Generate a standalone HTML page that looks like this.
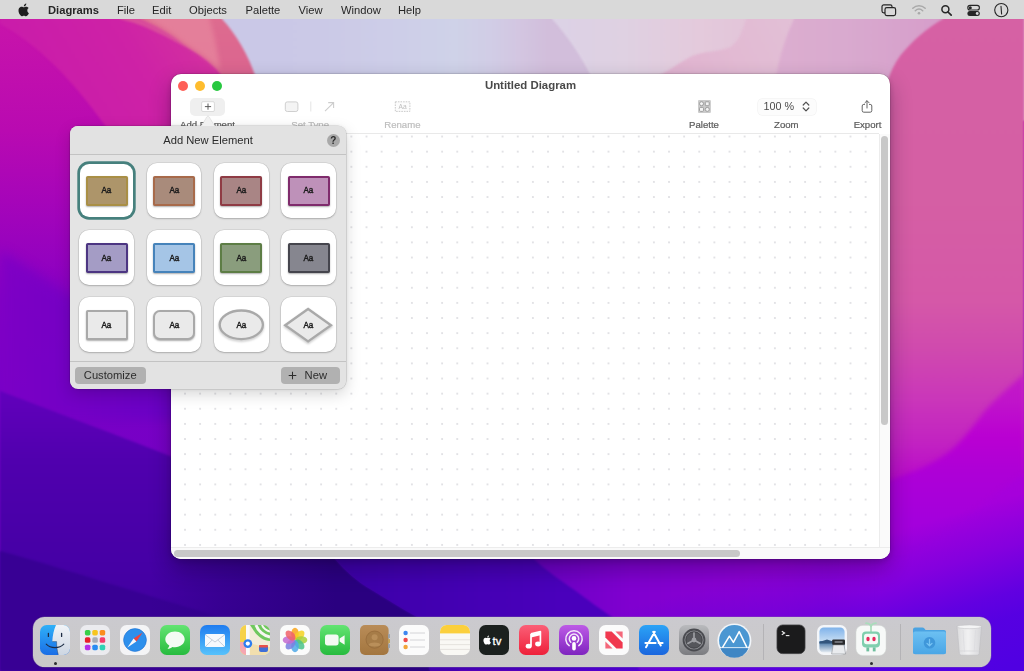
<!DOCTYPE html>
<html lang="en">
<head>
<meta charset="utf-8">
<title>Untitled Diagram</title>
<style>
*{box-sizing:border-box;margin:0;padding:0}
html,body{width:1024px;height:671px;overflow:hidden;background:#3a0090}
body{position:relative;font-family:"Liberation Sans",sans-serif;color:#222;-webkit-font-smoothing:antialiased}
.abs{position:absolute}
#wall{position:absolute;left:0;top:0;width:1024px;height:671px;display:block}
/* ---------- menubar ---------- */
#menubar{will-change:transform;position:absolute;left:0;top:0;width:1024px;height:19px;background:#d9d9d9}
#menubar span{position:absolute;top:3.9px;font-size:11.2px;line-height:13px;color:#262626;white-space:nowrap}
#menubar span.b{font-weight:bold}
#menubar svg{position:absolute}
/* ---------- window ---------- */
#win{will-change:transform;position:absolute;left:171px;top:74px;width:719px;height:485px;background:#fff;border-radius:10px;
 box-shadow:0 0 0 0.5px rgba(0,0,0,.18),0 10px 22px rgba(20,0,40,.32),0 2px 6px rgba(20,0,40,.18);overflow:hidden}
#title{position:absolute;left:0;width:719px;top:5px;text-align:center;font-size:11.4px;line-height:13px;font-weight:bold;color:#494949}
.tl{position:absolute;top:6.5px;width:10.5px;height:10.5px;border-radius:50%}
.tbl{position:absolute;font-size:9.6px;line-height:11px;color:#5a5a5a;-webkit-text-stroke:0.2px currentColor;white-space:nowrap;top:44.7px;width:80px;text-align:center}
.tbl.dis{color:#bdbdbd}
#canvas{position:absolute;left:0;top:59px;width:708px;height:414px;
 background-color:#fff;
 background-image:radial-gradient(circle,#dcdce0 0.55px,rgba(255,255,255,0) 1.25px);
 background-size:15.125px 15.125px;background-position:6.44px -5.06px;border-top:1px solid #e9e9e9}
#vtrack{position:absolute;left:708px;top:60px;width:11px;height:413px;background:#fafafa;border-left:1px solid #ececec}
#vthumb{position:absolute;left:710px;top:61.5px;width:7px;height:289.5px;border-radius:3.5px;background:#c8c8c8}
#htrack{position:absolute;left:0;top:473px;width:719px;height:12px;background:#fafafa;border-top:1px solid #ececec}
#hthumb{position:absolute;left:3px;top:476px;width:566px;height:6.5px;border-radius:3.5px;background:#c8c8c8}

/* ---------- popover ---------- */
#pop{will-change:transform;position:absolute;left:70px;top:126px;width:276px;height:262.5px;border-radius:8px;background:#e4e4e4;
 box-shadow:0 0 0 0.6px rgba(0,0,0,.17),0 5px 15px rgba(0,0,0,.17),0 0 4px rgba(0,0,0,.08)}
#pophead{position:absolute;left:0;top:0;width:276px;height:28.8px;background:#e2e2e2;border-radius:8px 8px 0 0;border-bottom:1px solid #c3c3c3}
#poptitle{position:absolute;left:0;width:276px;top:7.6px;text-align:center;font-size:11.2px;line-height:13px;color:#2a2a2a}
#popfoot{position:absolute;left:0;top:235.1px;width:276px;height:27.4px;border-top:1px solid #c3c3c3;border-radius:0 0 8px 8px;background:#e3e3e3}
.pbtn{position:absolute;top:241.1px;height:16.5px;border-radius:4px;background:#b1b1b1;font-size:11.2px;line-height:16px;color:#2c2c2c;text-align:center;white-space:nowrap}
.tile{position:absolute;width:54.8px;height:54.8px;border-radius:10px;background:#fff;box-shadow:0 0 0 0.5px rgba(0,0,0,.12),0 1px 2px rgba(0,0,0,.2)}
.tile.sel{box-shadow:none}
.tile.sel::after{content:"";position:absolute;left:0.9px;top:0.9px;right:0.9px;bottom:0.9px;box-shadow:0 0 0 2.7px #46807d;border-radius:9.2px}
.sh{position:absolute;left:6.4px;top:12.9px;width:42px;height:30.2px;border:2px solid;box-shadow:0 1px 1.8px rgba(0,0,0,.32);border-radius:1.8px}
.aa{position:absolute;left:0;width:54.8px;top:22.6px;text-align:center;font-size:9.2px;line-height:11px;color:#1c1c1c;transform:scaleX(.88);-webkit-text-stroke:0.45px #1c1c1c}
.tile svg{position:absolute;left:0;top:0}

/* ---------- dock ---------- */
#dock{position:absolute;left:33.3px;top:617px;width:958px;height:50px;border-radius:11.5px;background:linear-gradient(#cbcacf,#cac9c8);box-shadow:0 0 0 0.5px rgba(255,255,255,.25),0 0 0 1px rgba(0,0,0,.1)}
.di{position:absolute;display:block;overflow:visible}
.dsep{position:absolute;top:623.5px;width:1px;height:36px;background:#b4b3b6}
.ddot{position:absolute;top:661.8px;width:3px;height:3px;border-radius:50%;background:#2b2b2e}
</style>
</head>
<body>
<!-- ================= WALLPAPER ================= -->
<svg id="wall" viewBox="0 0 1024 671" preserveAspectRatio="none">
<defs>
<linearGradient id="gL" x1="0" y1="0" x2="0" y2="1">
 <stop offset="0.028" stop-color="#c814aa"/><stop offset="0.194" stop-color="#b90ab1"/>
 <stop offset="0.298" stop-color="#a605b9"/><stop offset="0.387" stop-color="#9402bf"/>
 <stop offset="0.447" stop-color="#8400c3"/><stop offset="0.58" stop-color="#7800c6"/><stop offset="1" stop-color="#7400c4"/>
</linearGradient>
<linearGradient id="gSal" x1="0" y1="0" x2="0" y2="1"><stop offset="0.15" stop-color="#de6c8f"/><stop offset="1" stop-color="#da6090"/></linearGradient>
<linearGradient id="gLav" x1="222" y1="0" x2="1024" y2="0" gradientUnits="userSpaceOnUse">
 <stop offset="0" stop-color="#cac8e7"/><stop offset="0.12" stop-color="#cbc9e7"/><stop offset="0.2" stop-color="#cdcde8"/><stop offset="0.29" stop-color="#cfd2e8"/><stop offset="0.334" stop-color="#d1cde6"/><stop offset="0.37" stop-color="#d3c6e1"/><stop offset="0.406" stop-color="#d2bedb"/><stop offset="1" stop-color="#d2bedb"/></linearGradient>
<linearGradient id="gLt" x1="552" y1="0" x2="790" y2="0" gradientUnits="userSpaceOnUse"><stop offset="0" stop-color="#dcd2e6"/><stop offset="0.3" stop-color="#dfd1e2"/><stop offset="0.62" stop-color="#e4cadc"/><stop offset="1" stop-color="#e2c1d7"/></linearGradient>
<linearGradient id="gPk" x1="660" y1="80" x2="800" y2="10" gradientUnits="userSpaceOnUse"><stop offset="0" stop-color="#e0b2cf"/><stop offset="0.5" stop-color="#e2bad3"/><stop offset="1" stop-color="#e2c1d7"/></linearGradient>
<linearGradient id="gPk2" x1="776" y1="0" x2="950" y2="0" gradientUnits="userSpaceOnUse"><stop offset="0" stop-color="#dcaed0"/><stop offset="0.4" stop-color="#d9aacf"/><stop offset="1" stop-color="#d69cca"/></linearGradient>
<linearGradient id="gR" x1="0" y1="0" x2="0" y2="671" gradientUnits="userSpaceOnUse">
 <stop offset="0.03" stop-color="#d661a4"/><stop offset="0.3" stop-color="#d55fa4"/><stop offset="0.45" stop-color="#d558a8"/><stop offset="0.52" stop-color="#d04aae"/><stop offset="0.596" stop-color="#ca36ba"/><stop offset="0.66" stop-color="#c222c2"/><stop offset="0.72" stop-color="#b808cc"/><stop offset="0.8" stop-color="#a000dc"/><stop offset="1" stop-color="#a000dc"/></linearGradient>
<linearGradient id="gR2" x1="0" y1="360" x2="0" y2="671" gradientUnits="userSpaceOnUse">
 <stop offset="0" stop-color="#c41ec4"/><stop offset="0.13" stop-color="#c014ca"/><stop offset="0.245" stop-color="#ba00d2"/><stop offset="0.354" stop-color="#ae00d6"/><stop offset="0.515" stop-color="#a400dc"/><stop offset="0.64" stop-color="#a000dc"/><stop offset="1" stop-color="#a000dc"/></linearGradient>
<linearGradient id="gR3" x1="0" y1="432" x2="0" y2="671" gradientUnits="userSpaceOnUse">
 <stop offset="0" stop-color="#b202d4"/><stop offset="0.2" stop-color="#a800da"/><stop offset="0.37" stop-color="#a200dc"/><stop offset="0.535" stop-color="#a000dc"/><stop offset="1" stop-color="#a000dc"/></linearGradient>
<linearGradient id="gB1" x1="0" y1="391" x2="0" y2="671" gradientUnits="userSpaceOnUse"><stop offset="0" stop-color="#6200bc"/><stop offset="0.25" stop-color="#5000ae"/><stop offset="0.6" stop-color="#4600a6"/><stop offset="1" stop-color="#3c009a"/></linearGradient>
<linearGradient id="gBm" x1="335" y1="0" x2="560" y2="0" gradientUnits="userSpaceOnUse"><stop offset="0" stop-color="#3c00a8"/><stop offset="1" stop-color="#4a00bc"/></linearGradient>
<linearGradient id="gBr" x1="534" y1="0" x2="1024" y2="0" gradientUnits="userSpaceOnUse"><stop offset="0" stop-color="#6a00c4"/><stop offset="0.2" stop-color="#8000d0"/><stop offset="0.46" stop-color="#8c00d3"/><stop offset="0.6" stop-color="#9000d4"/><stop offset="0.706" stop-color="#a000dc"/><stop offset="1" stop-color="#a000dc"/></linearGradient>
<linearGradient id="gDk" x1="150" y1="0" x2="335" y2="0" gradientUnits="userSpaceOnUse"><stop offset="0" stop-color="#2c0082" stop-opacity="0"/><stop offset="0.4" stop-color="#2c0082" stop-opacity="0.5"/><stop offset="1" stop-color="#2a0080" stop-opacity="1"/></linearGradient>
<linearGradient id="gBlue" x1="880" y1="535" x2="925.5" y2="691.8" gradientUnits="userSpaceOnUse"><stop offset="0" stop-color="#5000e2" stop-opacity="0"/><stop offset="0.29" stop-color="#5000e2" stop-opacity="0.35"/><stop offset="0.56" stop-color="#5000e2" stop-opacity="0.78"/><stop offset="0.7" stop-color="#5000e2" stop-opacity="0.92"/><stop offset="1" stop-color="#5000e2" stop-opacity="1"/></linearGradient>
<linearGradient id="gVi" x1="0" y1="0" x2="180" y2="0" gradientUnits="userSpaceOnUse"><stop offset="0" stop-color="#7c00c6"/><stop offset="1" stop-color="#6400c3"/></linearGradient>
<linearGradient id="gSw" x1="50" y1="130" x2="210" y2="30" gradientUnits="userSpaceOnUse"><stop offset="0" stop-color="#c91bab"/><stop offset="0.6" stop-color="#ce22a6"/><stop offset="1" stop-color="#d4339e"/></linearGradient>
<filter color-interpolation-filters="sRGB" id="b2" x="-10%" y="-10%" width="120%" height="120%"><feGaussianBlur stdDeviation="1.2"/></filter>
<filter color-interpolation-filters="sRGB" id="b3" x="-10%" y="-10%" width="120%" height="120%"><feGaussianBlur stdDeviation="2.5"/></filter>
<filter color-interpolation-filters="sRGB" id="b6" x="-20%" y="-20%" width="140%" height="140%"><feGaussianBlur stdDeviation="6"/></filter>
<filter color-interpolation-filters="sRGB" id="b20" x="-30%" y="-30%" width="160%" height="160%"><feGaussianBlur stdDeviation="20"/></filter>
</defs>
<rect width="1024" height="671" fill="url(#gL)"/>
<!-- top-left lighter magenta sweep -->
<path d="M0,0 L0,24 C38,44 74,82 104,124 C128,158 152,200 176,260 L300,260 L300,0 Z" fill="url(#gSw)" filter="url(#b2)"/>
<!-- mid pink band + salmon -->
<path d="M120,0 L120,19 C140,24 150,29 160,34 C172,40 178,43 186,47 C196,52 202,56 208,61 C216,68 220,72 224,78 C228,88 230,100 231,120 L300,120 L300,0 Z" fill="#d94c9b" filter="url(#b2)"/>
<path d="M141,0 L141,19 C158,26 172,34 184,44 C196,52 206,58 214,66 C222,74 228,84 232,100 L300,110 L300,0 Z" fill="url(#gSal)" filter="url(#b2)"/>
<path d="M148,14 L208,14 C214,34 218,52 220,70 L214,65 C206,57 196,51 184,43 C172,33 160,25 148,19 Z" fill="#e6839c" opacity="0.85" filter="url(#b3)"/>
<!-- lavender sky -->
<path d="M222,0 L222,19 C236,34 248,54 256,78 C260,92 262,104 263,120 L1024,120 L1024,0 Z" fill="url(#gLav)" filter="url(#b2)"/>
<!-- lighter facet 553..690 -->
<path d="M552,0 L552,19 C566,34 580,54 592,78 L790,78 L790,0 Z" fill="url(#gLt)" filter="url(#b2)"/>
<!-- pink facet rising to the right -->
<path d="M650,80 C668,72 680,62 692,56 C704,51 716,52 728,48 C738,44 742,32 746,19 L746,0 L1024,0 L1024,120 L650,120 Z" fill="url(#gPk)" filter="url(#b2)"/>
<path d="M794,0 L794,19 C786,36 780,54 776,76 L776,120 L1024,120 L1024,0 Z" fill="url(#gPk2)" filter="url(#b2)"/>
<path d="M0,250 C30,268 50,282 70,296 C110,320 150,338 200,360 L200,420 L0,420 Z" fill="url(#gVi)" opacity="0.8" filter="url(#b6)"/>
<!-- lower-left bands -->
<path d="M0,391 C60,414 120,436 170,456 C260,492 330,520 400,548 L460,671 L0,671 Z" fill="url(#gB1)" filter="url(#b2)"/>
<path d="M0,551 C40,562 76,573 107,583 C144,594 176,604 206,613 C240,624 300,640 360,656 L360,671 L0,671 Z" fill="#380094" filter="url(#b2)"/>
<!-- bottom strip -->
<path d="M335,530 L335,559 C346,572 358,582 370,589 C388,600 404,610 417,617 L430,671 L150,671 L150,530 Z" fill="url(#gDk)"/>
<path d="M335,530 L335,559 C346,572 358,582 370,589 C388,600 404,610 417,617 L430,671 L1024,671 L1024,530 Z" fill="url(#gBm)" filter="url(#b2)"/>
<path d="M534,530 L534,559 C548,572 560,580 573,589 C588,600 600,609 612,617 L640,671 L1024,671 L1024,530 Z" fill="url(#gBr)" filter="url(#b2)"/>
<!-- big right pink hill -->
<path d="M943,0 L943,19 C927,28 912,41 900,56 C889,71 884,90 882,112 L880,671 L1024,671 L1024,0 Z" fill="url(#gR)" filter="url(#b2)"/>
<!-- right diagonal facets -->
<path d="M1024,374 C1006,390 994,400 984,412 C970,430 960,444 946,454 C926,468 908,474 880,484 L880,671 L1024,671 Z" fill="url(#gR2)" filter="url(#b3)"/>
<path d="M1024,474 C1000,490 982,506 964,520 C940,538 916,552 880,568 L880,671 L1024,671 Z" fill="url(#gR3)" filter="url(#b3)"/>
<rect x="560" y="470" width="464" height="201" fill="url(#gBlue)"/>
</svg>

<!-- ================= MENUBAR ================= -->
<div id="menubar">
<span class="b" style="left:48px">Diagrams</span>
<span style="left:117px">File</span>
<span style="left:152px">Edit</span>
<span style="left:189px">Objects</span>
<span style="left:245.5px">Palette</span>
<span style="left:298.5px">View</span>
<span style="left:341px">Window</span>
<span style="left:398px">Help</span>

<svg style="left:17px;top:1.5px" width="15" height="16" viewBox="0 0 15 16"><path d="M10.3,8.4c0-1.6,1.3-2.4,1.4-2.4c-0.8-1.1-1.9-1.3-2.4-1.3c-1-0.1-2,0.6-2.5,0.6c-0.5,0-1.3-0.6-2.1-0.6C3.6,4.7,2.6,5.3,2,6.300c-1.1,1.900-0.300,4.800,0.800,6.300c0.500,0.800,1.200,1.600,2,1.600c0.800,0,1.100-0.500,2.100-0.500c1,0,1.200,0.500,2.100,0.500c0.900,0,1.400-0.800,2-1.500c0.600-0.900,0.900-1.700,0.900-1.800C11.800,10.900,10.300,10.300,10.300,8.400z M8.700,3.600C9.100,3.100,9.400,2.300,9.300,1.600C8.700,1.600,7.900,2,7.500,2.500C7.100,3,6.700,3.700,6.800,4.400C7.500,4.500,8.200,4.100,8.700,3.600z" fill="#1e1e1e"/></svg>
<svg style="left:880px;top:3px" width="18" height="14" viewBox="0 0 18 14"><rect x="2" y="1.8" width="10" height="8" rx="1.8" fill="none" stroke="#262626" stroke-width="1.2"/><rect x="5" y="4.6" width="10.600" height="8" rx="1.800" fill="#d9d9d9" stroke="#262626" stroke-width="1.200"/></svg>
<svg style="left:911px;top:3px" width="16" height="13" viewBox="0 0 16 13"><g fill="none" stroke="#a9a9a9" stroke-width="1.500" stroke-linecap="round"><path d="M1.800,5.200C5.400,1.800,10.600,1.800,14.200,5.200"/><path d="M4.300,7.700C6.500,5.700,9.500,5.700,11.700,7.700"/></g><circle cx="8" cy="10.200" r="1.300" fill="#a9a9a9"/></svg>
<svg style="left:940px;top:4px" width="13" height="13" viewBox="0 0 13 13"><circle cx="5.400" cy="5.300" r="3.500" fill="none" stroke="#262626" stroke-width="1.500"/><path d="M8,8L11.200,11.200" stroke="#262626" stroke-width="1.700" stroke-linecap="round"/></svg>
<svg style="left:966px;top:4px" width="15" height="13" viewBox="0 0 15 13"><rect x="1.800" y="1.400" width="11.600" height="4.600" rx="2.300" fill="none" stroke="#262626" stroke-width="1.100"/><circle cx="4.300" cy="3.700" r="1.500" fill="#262626"/><rect x="1.400" y="7" width="12.400" height="5" rx="2.500" fill="#262626"/><circle cx="11.200" cy="9.500" r="1.400" fill="#d9d9d9"/></svg>
<svg style="left:993px;top:2px" width="17" height="16" viewBox="0 0 17 16"><circle cx="8.300" cy="8.100" r="6.600" fill="none" stroke="#262626" stroke-width="1.100"/><path d="M8,4.200L8.600,12" stroke="#262626" stroke-width="1.100" stroke-linecap="round"/></svg>
</div>

<!-- ================= WINDOW ================= -->
<div id="win">
 <div class="tl" style="left:6.5px;background:#fe5f57"></div>
 <div class="tl" style="left:23.5px;background:#febc2e"></div>
 <div class="tl" style="left:40.5px;background:#28c840"></div>
 <div id="title">Untitled Diagram</div>

 <!-- toolbar -->
 <div class="abs" style="left:19px;top:23.5px;width:35px;height:18px;border-radius:5px;background:#efefef"></div>
 <svg class="abs" style="left:29px;top:26px" width="16" height="14" viewBox="0 0 16 14"><rect x="1.6" y="1.7" width="12.8" height="9.8" rx="1.4" fill="#fff" stroke="#cdcdcd" stroke-width="0.7"/><path d="M8,3.500V9.700M4.900,6.600H11.100" stroke="#555" stroke-width="0.950" fill="none"/></svg>
 <div class="tbl" style="left:-3.5px">Add Element</div>
 <svg class="abs" style="left:112px;top:26px" width="56" height="14" viewBox="0 0 56 14"><rect x="2.3" y="1.9" width="12.6" height="9.6" rx="2" fill="#f4f4f4" stroke="#cfcfcf" stroke-width="1"/><path d="M27.8,1.5V11.5" stroke="#e4e4e4" stroke-width="1"/><path d="M42,11.2L50.4,2.8M45.2,2.6H50.6V8" stroke="#cdcdcd" stroke-width="1.1" fill="none"/></svg>
 <div class="tbl dis" style="left:99.2px">Set Type</div>
 <svg class="abs" style="left:222px;top:26px" width="20" height="14" viewBox="0 0 20 14"><rect x="2.3" y="1.8" width="14.6" height="9.6" fill="#fcfcfc" stroke="#c4c4c4" stroke-width="0.9" stroke-dasharray="1.6 1"/><text x="9.6" y="9.3" font-size="6.6" text-anchor="middle" fill="#bdbdbd" font-family="Liberation Sans, sans-serif">Aa</text></svg>
 <div class="tbl dis" style="left:191.4px">Rename</div>
 <svg class="abs" style="left:525px;top:25px" width="18" height="16" viewBox="0 0 18 16"><rect x="2" y="1.100" width="12.900" height="12.900" rx="1" fill="#cbcbcb"/><g fill="#f4f4f4" stroke="#8e8e8e" stroke-width="0.800"><circle cx="5.500" cy="4.700" r="2"/><rect x="9.300" y="2.800" width="3.900" height="3.900" rx="0.500"/><rect x="3.500" y="8.400" width="4" height="4" rx="1"/><circle cx="11.300" cy="10.400" r="2"/></g></svg>
 <div class="tbl" style="left:493px">Palette</div>
 <div class="abs" style="left:586.5px;top:24.5px;width:58px;height:16px;border-radius:4px;background:#fcfcfc;box-shadow:0 0 0 0.5px #eeeeee"></div>
 <div class="abs" style="left:592.6px;top:26px;font-size:10.8px;line-height:12px;color:#4b4b4b;white-space:nowrap">100 %</div>
 <svg class="abs" style="left:630px;top:26px" width="10" height="13" viewBox="0 0 10 13"><path d="M2.2,5L5,2.2L7.8,5M2.2,8L5,10.8L7.8,8" stroke="#505050" stroke-width="1.2" fill="none" stroke-linecap="round" stroke-linejoin="round"/></svg>
 <div class="tbl" style="left:575.3px">Zoom</div>
 <svg class="abs" style="left:689px;top:25px" width="14" height="15" viewBox="0 0 14 15"><path d="M4.6,5.4H3.8Q2.2,5.4 2.2,7V11.6Q2.2,13.2 3.8,13.2H10.2Q11.8,13.2 11.8,11.6V7Q11.8,5.4 10.2,5.4H9.4" stroke="#5c5c5c" stroke-width="0.95" fill="none" stroke-linecap="round"/><path d="M7,9V1.9M4.9,3.8L7,1.7L9.1,3.8" stroke="#5c5c5c" stroke-width="0.95" fill="none" stroke-linecap="round" stroke-linejoin="round"/></svg>
 <div class="tbl" style="left:656.5px">Export</div>
 <div id="canvas"></div>
 <div id="vtrack"></div><div id="vthumb"></div>
 <div id="htrack"></div><div id="hthumb"></div>
</div>

<!-- ================= DOCK ================= -->
<svg width="0" height="0" style="position:absolute"><defs>
<linearGradient id="dFi" x1="0" y1="0" x2="0" y2="1"><stop offset="0" stop-color="#2eb0f8"/><stop offset="1" stop-color="#1b6ee6"/></linearGradient>
<linearGradient id="dFw" x1="0" y1="0" x2="0" y2="1"><stop offset="0" stop-color="#f1f4f8"/><stop offset="1" stop-color="#cdd6e2"/></linearGradient>
<linearGradient id="dMs" x1="0" y1="0" x2="0" y2="1"><stop offset="0" stop-color="#63e472"/><stop offset="1" stop-color="#27bb3e"/></linearGradient>
<linearGradient id="dMl" x1="0" y1="0" x2="0" y2="1"><stop offset="0" stop-color="#1f7cf0"/><stop offset="1" stop-color="#57c2fb"/></linearGradient>
<linearGradient id="dMu" x1="0" y1="0" x2="0" y2="1"><stop offset="0" stop-color="#fb5f77"/><stop offset="1" stop-color="#ee2039"/></linearGradient>
<linearGradient id="dPo" x1="0" y1="0" x2="0" y2="1"><stop offset="0" stop-color="#bd5be6"/><stop offset="1" stop-color="#7f24bf"/></linearGradient>
<linearGradient id="dAs" x1="0" y1="0" x2="0" y2="1"><stop offset="0" stop-color="#2ba3f6"/><stop offset="1" stop-color="#1a66de"/></linearGradient>
<linearGradient id="dSp" x1="0" y1="0" x2="0" y2="1"><stop offset="0" stop-color="#b9babd"/><stop offset="1" stop-color="#7b7c80"/></linearGradient>
<linearGradient id="dFo" x1="0" y1="0" x2="0" y2="1"><stop offset="0" stop-color="#6cc0f2"/><stop offset="1" stop-color="#4aa6e6"/></linearGradient>
<linearGradient id="dTr" x1="0" y1="0" x2="1" y2="0"><stop offset="0" stop-color="#dcdcde"/><stop offset="0.45" stop-color="#f1f1f2"/><stop offset="1" stop-color="#d6d6d9"/></linearGradient>
<linearGradient id="dCo" x1="0" y1="0" x2="0" y2="1"><stop offset="0" stop-color="#b98c58"/><stop offset="1" stop-color="#a3763f"/></linearGradient>
<linearGradient id="dPv" x1="0" y1="0" x2="0" y2="1"><stop offset="0" stop-color="#7fb2ea"/><stop offset="0.55" stop-color="#c6ddf3"/><stop offset="0.56" stop-color="#3f6fa0"/><stop offset="1" stop-color="#e8eef4"/></linearGradient>
<clipPath id="dClip"><rect width="30" height="30" rx="6.700" ry="6.700"/></clipPath>
</defs></svg>
<div id="dock">
</div>
<div id="dockicons">
<svg class="di" style="left:40.3px;top:625px" width="30" height="30" viewBox="0 0 30 30"><g clip-path="url(#dClip)"><rect width="30" height="30" fill="url(#dFi)"/>
<path d="M16,0C13.800,4.600 12.600,10.400 12.300,16.600H16.600C16.600,21.600 17.200,26 18.400,30H30V0Z" fill="url(#dFw)"/></g>
<path d="M12.300,16.600H16.600C16.600,21.600 17.200,26 18.300,29.600" fill="none" stroke="#1d2c44" stroke-width="0.700" opacity="0.55"/>
<path d="M8.400,8.300V11.400M21.600,8.300V11.400" stroke="#1d2c44" stroke-width="1.300" stroke-linecap="round"/>
<path d="M6.200,19.200C10.600,23.800 19.400,23.800 23.800,19.200" fill="none" stroke="#1d2c44" stroke-width="1.100" stroke-linecap="round"/></svg>
<svg class="di" style="left:80px;top:625px" width="30" height="30" viewBox="0 0 30 30"><rect width="30" height="30" rx="6.700" ry="6.700" fill="#ebebef"/><rect x="4.9" y="4.9" width="5.500" height="5.500" rx="1.600" fill="#38d048"/><rect x="12.3" y="4.9" width="5.500" height="5.500" rx="1.600" fill="#f7c51e"/><rect x="19.7" y="4.9" width="5.500" height="5.500" rx="1.600" fill="#fb8c1c"/><rect x="4.9" y="12.3" width="5.500" height="5.500" rx="1.600" fill="#e8202c"/><rect x="12.3" y="12.3" width="5.500" height="5.500" rx="1.600" fill="#a9adb6"/><rect x="19.7" y="12.3" width="5.500" height="5.500" rx="1.600" fill="#f53d6c"/><rect x="4.9" y="19.7" width="5.500" height="5.500" rx="1.600" fill="#b431e8"/><rect x="12.3" y="19.7" width="5.500" height="5.500" rx="1.600" fill="#2a8cf2"/><rect x="19.7" y="19.7" width="5.500" height="5.500" rx="1.600" fill="#2fd3b4"/></svg>
<svg class="di" style="left:120.2px;top:625px" width="30" height="30" viewBox="0 0 30 30"><rect width="30" height="30" rx="6.700" ry="6.700" fill="#f4f4f6"/><circle cx="15" cy="15" r="11.400" fill="#2d8fec"/><circle cx="15" cy="15" r="11.400" fill="none" stroke="#1c6fd0" stroke-width="0.600"/>
<path d="M22.600,7.400L13.600,13.600L16.400,16.400Z" fill="#f0443c"/><path d="M7.400,22.600L13.600,13.600L16.400,16.400Z" fill="#f6f8fb"/></svg>
<svg class="di" style="left:160.1px;top:625px" width="30" height="30" viewBox="0 0 30 30"><rect width="30" height="30" rx="6.700" ry="6.700" fill="url(#dMs)"/><path d="M15,6.400C9.600,6.400 5.300,9.900 5.300,14.300C5.300,16.900 6.900,19.200 9.300,20.600C9.100,21.900 8.400,23 7.500,23.800C9.500,23.700 11.100,23 12.300,21.900C13.200,22.100 14.100,22.200 15,22.200C20.400,22.200 24.700,18.700 24.700,14.300C24.700,9.900 20.400,6.400 15,6.400Z" fill="#f4fbf4"/></svg>
<svg class="di" style="left:200.2px;top:625px" width="30" height="30" viewBox="0 0 30 30"><rect width="30" height="30" rx="6.700" ry="6.700" fill="url(#dMl)"/><rect x="5" y="9" width="20" height="13" rx="1.800" fill="#f6f9fd"/><path d="M5.600,10L15,17L24.400,10M5.600,21.400L12.200,15M24.400,21.400L17.800,15" fill="none" stroke="#b9c4d2" stroke-width="0.800"/></svg>
<svg class="di" style="left:240.1px;top:625px" width="30" height="30" viewBox="0 0 30 30"><g clip-path="url(#dClip)"><rect width="30" height="30" fill="#f2ecd8"/><rect x="0" y="0" width="6" height="30" fill="#f6d24a"/><rect x="0" y="17" width="6" height="13" fill="#f5a6b2"/>
<path d="M10,0H30V16C24,16 18,12 14,6Z" fill="#6fc85e"/><path d="M16,0C18,6 24,11 30,12" fill="none" stroke="#f7f7f2" stroke-width="3"/><path d="M22,0C23,3 27,6 30,6.500" fill="none" stroke="#f7f7f2" stroke-width="2"/>
<rect x="6" y="0" width="3.600" height="30" fill="#fafafa"/><path d="M10,18C16,20 22,22 30,22V30H10Z" fill="#f2dfae"/>
<rect x="19" y="20" width="9" height="7" rx="2" fill="#3f6fd8"/><rect x="19" y="20" width="9" height="2.400" rx="1" fill="#e8504a"/></g>
<circle cx="7.800" cy="18.600" r="4.400" fill="#2d7ff0"/><circle cx="7.800" cy="18.600" r="2.100" fill="#fff"/></svg>
<svg class="di" style="left:280.3px;top:625px" width="30" height="30" viewBox="0 0 30 30"><rect width="30" height="30" rx="6.700" ry="6.700" fill="#fbfbfb"/><ellipse cx="15" cy="8.700" rx="3.800" ry="6" fill="#f9a51c" opacity="0.860" transform="rotate(0 15 15)"/><ellipse cx="15" cy="8.700" rx="3.800" ry="6" fill="#f5d323" opacity="0.860" transform="rotate(45 15 15)"/><ellipse cx="15" cy="8.700" rx="3.800" ry="6" fill="#a8d03c" opacity="0.860" transform="rotate(90 15 15)"/><ellipse cx="15" cy="8.700" rx="3.800" ry="6" fill="#4cc38a" opacity="0.860" transform="rotate(135 15 15)"/><ellipse cx="15" cy="8.700" rx="3.800" ry="6" fill="#4fa9e8" opacity="0.860" transform="rotate(180 15 15)"/><ellipse cx="15" cy="8.700" rx="3.800" ry="6" fill="#7a7fe0" opacity="0.860" transform="rotate(225 15 15)"/><ellipse cx="15" cy="8.700" rx="3.800" ry="6" fill="#c46bd0" opacity="0.860" transform="rotate(270 15 15)"/><ellipse cx="15" cy="8.700" rx="3.800" ry="6" fill="#f0626a" opacity="0.860" transform="rotate(315 15 15)"/></svg>
<svg class="di" style="left:319.6px;top:625px" width="30" height="30" viewBox="0 0 30 30"><rect width="30" height="30" rx="6.700" ry="6.700" fill="url(#dMs)"/><rect x="5" y="9.600" width="13.600" height="10.800" rx="2.600" fill="#f3faf3"/><path d="M19.600,13.400L24.600,10.200V19.800L19.600,16.600Z" fill="#f3faf3"/></svg>
<svg class="di" style="left:359.6px;top:625px" width="30" height="30" viewBox="0 0 30 30"><rect width="28.600" height="30" rx="5" fill="url(#dCo)"/><rect x="28" y="9" width="2" height="4" rx="0.600" fill="#9aa0a8"/><rect x="28" y="14" width="2" height="4" rx="0.600" fill="#c2a15a"/><rect x="28" y="19" width="2" height="4" rx="0.600" fill="#9aa0a8"/>
<circle cx="14.600" cy="14.600" r="8.600" fill="#a67c48" stroke="#93693a" stroke-width="0.700"/><circle cx="14.600" cy="12.200" r="3" fill="#b98f5a"/><path d="M8.600,19.800C9.800,16.600 19.400,16.600 20.600,19.800C19,22 10.200,22 8.600,19.800Z" fill="#b98f5a"/></svg>
<svg class="di" style="left:399.4px;top:625px" width="30" height="30" viewBox="0 0 30 30"><rect width="30" height="30" rx="6.700" ry="6.700" fill="#fbfbfb"/><circle cx="6.600" cy="8" r="2.200" fill="#3d86f0"/><circle cx="6.600" cy="15" r="2.200" fill="#ee4b4b"/><circle cx="6.600" cy="22" r="2.200" fill="#f2a53a"/>
<path d="M11,8H26M11,15H26M11,22H26" stroke="#cfcfd3" stroke-width="0.900"/></svg>
<svg class="di" style="left:439.5px;top:625px" width="30" height="30" viewBox="0 0 30 30"><g clip-path="url(#dClip)"><rect width="30" height="30" fill="#f9f8f4"/><rect width="30" height="8.400" fill="#fbcf3c"/><path d="M0,14.800H30M0,19.600H30M0,24.400H30" stroke="#dcdad4" stroke-width="0.700"/></g></svg>
<svg class="di" style="left:478.8px;top:625px" width="30" height="30" viewBox="0 0 30 30"><rect width="30" height="30" rx="6.700" ry="6.700" fill="#1b201e"/><path d="M9.300,13.600c0-1.200,1-1.800,1-1.800c-0.600-0.800-1.400-0.900-1.700-0.900c-0.700-0.100-1.400,0.400-1.800,0.400c-0.400,0-0.900-0.400-1.500-0.400c-0.800,0-1.500,0.400-1.900,1.100c-0.800,1.400-0.200,3.500,0.600,4.600c0.400,0.600,0.900,1.200,1.500,1.200c0.600,0,0.800-0.400,1.500-0.400c0.700,0,0.900,0.400,1.500,0.400c0.600,0,1-0.600,1.400-1.100c0.400-0.600,0.600-1.200,0.600-1.300C10.500,15.400,9.300,14.900,9.300,13.600z M8.100,10.100c0.300-0.400,0.500-0.900,0.500-1.400c-0.500,0-1,0.300-1.300,0.700c-0.300,0.300-0.600,0.900-0.500,1.400C7.300,10.800,7.800,10.500,8.100,10.100z" fill="#fff" transform="translate(1.400,1.800)"/>
<text x="13.600" y="19.800" font-size="11.400" font-family="Liberation Sans, sans-serif" fill="#fff" stroke="#fff" stroke-width="0.300">tv</text></svg>
<svg class="di" style="left:519.3px;top:625px" width="30" height="30" viewBox="0 0 30 30"><rect width="30" height="30" rx="6.700" ry="6.700" fill="url(#dMu)"/><path d="M12,8.800L21.400,6.600V18.600" fill="none" stroke="#fff" stroke-width="1.700" stroke-linejoin="round"/><path d="M12,8.800V20.800" stroke="#fff" stroke-width="1.700"/><path d="M12,9.200L21.400,7V10.200L12,12.400Z" fill="#fff"/><ellipse cx="9.700" cy="21.200" rx="3" ry="2.400" fill="#fff"/><ellipse cx="19.100" cy="19" rx="3" ry="2.400" fill="#fff"/></svg>
<svg class="di" style="left:558.9px;top:625px" width="30" height="30" viewBox="0 0 30 30"><rect width="30" height="30" rx="6.700" ry="6.700" fill="url(#dPo)"/><path d="M10.200,20.600A8.200,8.200 0 1 1 19.800,20.600" fill="none" stroke="#f3e8fa" stroke-width="1.500" stroke-linecap="round"/><path d="M11.800,17.200A4.700,4.700 0 1 1 18.200,17.200" fill="none" stroke="#f3e8fa" stroke-width="1.500" stroke-linecap="round"/><circle cx="15" cy="13.400" r="2.300" fill="#fff"/><rect x="13.200" y="17" width="3.600" height="8.600" rx="1.800" fill="#fff"/></svg>
<svg class="di" style="left:599.1px;top:625px" width="30" height="30" viewBox="0 0 30 30"><rect width="30" height="30" rx="6.700" ry="6.700" fill="#fbfbfb"/><path d="M6.400,6.400H12.600L23.600,17.400V23.600H17.400L6.400,12.600Z" fill="#f0384e"/><path d="M6.400,16.400L13.600,23.600H6.400Z" fill="#f4677a"/><path d="M23.600,13.600L16.400,6.400H23.600Z" fill="#f4677a"/></svg>
<svg class="di" style="left:638.7px;top:625px" width="30" height="30" viewBox="0 0 30 30"><rect width="30" height="30" rx="6.700" ry="6.700" fill="url(#dAs)"/><path d="M15.800,6.800L9.400,18M14.200,6.800L21.800,20.400M6.400,18H16.600M19.600,18H23.600M8.400,19.800L7,22.200" stroke="#fff" stroke-width="2" stroke-linecap="round" fill="none"/></svg>
<svg class="di" style="left:678.8px;top:625px" width="30" height="30" viewBox="0 0 30 30"><rect width="30" height="30" rx="6.700" ry="6.700" fill="url(#dSp)"/><circle cx="15" cy="15" r="11.400" fill="#4a4b50"/><circle cx="15" cy="15" r="9.600" fill="#8a8b90"/><circle cx="15" cy="15" r="8.200" fill="#55565b"/>
<path d="M15,15V6.800M15,15L22.100,19.100M15,15L7.900,19.100" stroke="#9d9ea3" stroke-width="1.700"/><circle cx="15" cy="15" r="2.400" fill="#9d9ea3"/><circle cx="15" cy="15" r="8.200" fill="none" stroke="#37383c" stroke-width="0.800"/></svg>
<svg class="di" style="left:717px;top:622.6px" width="34.8" height="34.8" viewBox="0 0 34.8 34.8"><circle cx="17.400" cy="17.400" r="17" fill="#f1f5f9"/><circle cx="17.400" cy="17.400" r="15.300" fill="#4b97d2"/><path d="M5.400,24.600L12.400,13.200L16.400,19.400L22.200,8.600L30,24.600" fill="none" stroke="#fff" stroke-width="1.500" stroke-linejoin="round"/><path d="M3,24.800H32" stroke="#fff" stroke-width="1"/><path d="M3.200,25.200H31.600A15.300,15.300 0 0 1 3.200,25.200Z" fill="#3f86c4"/></svg>
<svg class="di" style="left:776.9px;top:625.4px" width="28" height="28.6" viewBox="0 0 28 28.6"><rect width="28" height="28.600" rx="5.600" fill="#1b1b1c" stroke="#3a3a3c" stroke-width="0.800"/><path d="M4.800,6.200L7.600,8L4.800,9.800" stroke="#f0f0f0" stroke-width="1.100" fill="none"/><path d="M8.800,10.600H12.400" stroke="#f0f0f0" stroke-width="1.100"/></svg>
<svg class="di" style="left:817.1px;top:625px" width="30" height="30" viewBox="0 0 30 30"><g clip-path="url(#dClip)"><rect width="30" height="30" fill="#f4f6f9"/><rect x="2.400" y="2.400" width="25.200" height="25.200" rx="4.400" fill="url(#dPv)"/><path d="M2.400,17L10,14.500L16,16.500L22,15L27.600,17V18.600H2.400Z" fill="#32557c"/></g>
<rect x="15.200" y="14.400" width="12.800" height="5.600" rx="1.200" fill="#2a2b2e"/><path d="M16.200,20H27L28.600,29H14.600Z" fill="#e9ebee" stroke="#8d9096" stroke-width="0.600"/><rect x="17.400" y="16" width="8.400" height="2" rx="1" fill="#6e7076"/></svg>
<svg class="di" style="left:856.2px;top:621.6px" width="30" height="33.4" viewBox="0 0 30 33.4"><rect y="3.400" width="30" height="30" rx="6.700" ry="6.700" fill="#f7f9f8" stroke="#d4dad6" stroke-width="0.500"/>
<path d="M15,10V4.600M15,5.400C15,2.600 12.600,1.400 10,1.200M15,5.400C15,2.600 17.400,1.400 20,1.200" stroke="#a9dcbb" stroke-width="1.700" fill="none" stroke-linecap="round"/>
<rect x="6" y="9.600" width="18" height="16" rx="4" fill="#7fcfae"/><rect x="8" y="11.800" width="14" height="10.400" rx="2.600" fill="#f4faf7"/><rect x="10.400" y="25.400" width="2.800" height="4" fill="#6fbf9e"/><rect x="16.800" y="25.400" width="2.800" height="4" fill="#6fbf9e"/>
<ellipse cx="12" cy="17" rx="1.700" ry="2.200" fill="#e8285c"/><ellipse cx="18" cy="17" rx="1.700" ry="2.200" fill="#e8285c"/></svg>
<svg class="di" style="left:911.6px;top:625.4px" width="35" height="30" viewBox="0 0 35 30"><path d="M1,4.600Q1,2.600 3,2.600H10.400Q11.600,2.600 12.400,3.600L13.600,5H32Q34,5 34,7V27Q34,29 32,29H3Q1,29 1,27Z" fill="#4ba3e2"/><rect x="1" y="6.600" width="33" height="22.600" rx="2.200" fill="url(#dFo)"/><circle cx="17.500" cy="17.800" r="5.800" fill="#3f97da"/><path d="M17.500,14.400V20.600M15,18.400L17.500,20.900L20,18.400" stroke="#78c4f4" stroke-width="1.300" fill="none" stroke-linecap="round" stroke-linejoin="round"/></svg>
<svg class="di" style="left:955.8px;top:624.2px" width="26.6" height="32" viewBox="0 0 26.6 32"><path d="M1,2.400H25.600L23.200,29.400Q23,31.200 21.200,31.200H5.400Q3.600,31.200 3.400,29.400Z" fill="url(#dTr)" stroke="#bdbdc1" stroke-width="0.600"/><path d="M3.200,27L23.400,27" stroke="#d2d2d5" stroke-width="0.600"/><ellipse cx="13.300" cy="2.800" rx="12.300" ry="1.900" fill="#f4f4f5" stroke="#c4c4c8" stroke-width="0.600"/><path d="M7,6L8.400,28M19.600,6L18.200,28" stroke="#dcdcdf" stroke-width="0.800"/></svg>
<div class="dsep" style="left:762.600px"></div><div class="dsep" style="left:900.200px"></div>
<div class="ddot" style="left:54px"></div><div class="ddot" style="left:869.800px"></div>
</div>
<!-- ================= POPOVER ================= -->
<svg width="0" height="0" style="position:absolute"><defs><filter color-interpolation-filters="sRGB" id="tb" x="-20%" y="-20%" width="140%" height="140%"><feGaussianBlur stdDeviation="0.8"/></filter></defs></svg>
<div id="pop">
 <svg class="abs" style="left:128px;top:-11px" width="20" height="13" viewBox="0 0 20 13"><path d="M0,12.300C2.600,11.900 4.400,9.400 6,6.600L8.700,1.900Q10,-0.100 11.300,1.900L14,6.600C15.600,9.400 17.400,11.900 20,12.300V13H0Z" fill="#f1f1f1" stroke="rgba(0,0,0,.13)" stroke-width="0.600"/><rect x="0" y="12.100" width="20" height="1" fill="#e7e7e7"/></svg>
 <div id="pophead"></div>
 <div id="poptitle">Add New Element</div>
 <div class="abs" style="left:256.800px;top:8.2px;width:13px;height:13px;border-radius:50%;background:#a9a9a9;color:#2a2a2a;font-size:10px;line-height:13px;text-align:center;font-weight:bold">?</div>
 <div class="tile sel" style="left:9.4px;top:36.9px"><div class="sh" style="background:#ad956a;border-color:#a98f45"></div><div class="aa">Aa</div></div>
 <div class="tile" style="left:76.6px;top:36.9px"><div class="sh" style="background:#a98b7b;border-color:#a86a4a"></div><div class="aa">Aa</div></div>
 <div class="tile" style="left:144.0px;top:36.9px"><div class="sh" style="background:#a98585;border-color:#8f3b44"></div><div class="aa">Aa</div></div>
 <div class="tile" style="left:211.4px;top:36.9px"><div class="sh" style="background:#be91b9;border-color:#7f2b6c"></div><div class="aa">Aa</div></div>
 <div class="tile" style="left:9.4px;top:104.4px"><div class="sh" style="background:#a49cc5;border-color:#4c3582"></div><div class="aa">Aa</div></div>
 <div class="tile" style="left:76.6px;top:104.4px"><div class="sh" style="background:#a5c5e6;border-color:#4683ba"></div><div class="aa">Aa</div></div>
 <div class="tile" style="left:144.0px;top:104.4px"><div class="sh" style="background:#8a9d7d;border-color:#5d7d45"></div><div class="aa">Aa</div></div>
 <div class="tile" style="left:211.4px;top:104.4px"><div class="sh" style="background:#86868f;border-color:#45454d"></div><div class="aa">Aa</div></div>
 <div class="tile" style="left:9.4px;top:171.3px"><div class="sh" style="background:#eaeaea;border-color:#a9a9a9"></div><div class="aa">Aa</div></div>
 <div class="tile" style="left:76.6px;top:171.3px"><div class="sh" style="background:#eaeaea;border-color:#a9a9a9;border-radius:7px"></div><div class="aa">Aa</div></div>
 <div class="tile" style="left:144.0px;top:171.3px"><svg width="55" height="55" viewBox="0 0 55 55"><ellipse cx="27.3" cy="29.2" rx="21.6" ry="14.3" fill="none" stroke="rgba(0,0,0,.22)" stroke-width="2.4" filter="url(#tb)"/><ellipse cx="27.3" cy="27.8" rx="21.6" ry="14.3" fill="#eaeaea" stroke="#a9a9a9" stroke-width="2.3"/></svg><div class="aa">Aa</div></div>
 <div class="tile" style="left:211.4px;top:171.3px"><svg width="55" height="55" viewBox="0 0 55 55"><path d="M4.2,29.500L27.100,13.300L50,29.500L27.100,45.700Z" fill="none" stroke="rgba(0,0,0,.22)" stroke-width="2.400" filter="url(#tb)"/><path d="M4.200,28.200L27.100,12L50,28.200L27.100,44.400Z" fill="#eaeaea" stroke="#a9a9a9" stroke-width="2.300" stroke-linejoin="miter"/></svg><div class="aa">Aa</div></div>
 <div id="popfoot"></div>
 <div class="pbtn" style="left:5px;width:70.500px">Customize</div>
 <div class="pbtn" style="left:211.400px;width:58.600px"><svg style="position:absolute;left:6.600px;top:3.600px" width="9" height="9" viewBox="0 0 9 9"><path d="M4.500,0.700V8.300M0.700,4.500H8.300" stroke="#2c2c2c" stroke-width="1.050" fill="none"/></svg><span style="position:absolute;left:23.200px;top:0">New</span></div>
</div>

</body>
</html>
